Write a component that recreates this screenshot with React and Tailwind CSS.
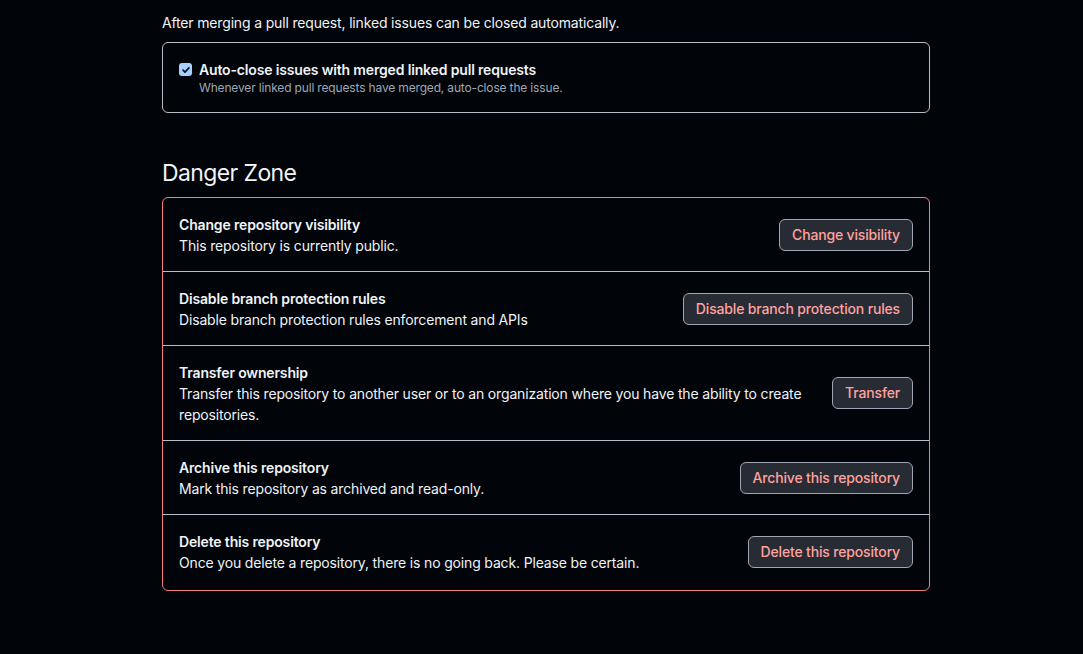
import React from 'react';

const rows = [
  {
    title: 'Change repository visibility',
    desc: 'This repository is currently public.',
    action: 'Change visibility',
  },
  {
    title: 'Disable branch protection rules',
    desc: 'Disable branch protection rules enforcement and APIs',
    action: 'Disable branch protection rules',
  },
  {
    title: 'Transfer ownership',
    desc: 'Transfer this repository to another user or to an organization where you have the ability to create repositories.',
    action: 'Transfer',
  },
  {
    title: 'Archive this repository',
    desc: 'Mark this repository as archived and read-only.',
    action: 'Archive this repository',
  },
  {
    title: 'Delete this repository',
    desc: 'Once you delete a repository, there is no going back. Please be certain.',
    action: 'Delete this repository',
  },
];

function DangerRow({ title, desc, action, last }) {
  return (
    <div className={`flex items-center gap-4 px-4 pt-[17px] ${last ? 'pb-[17px]' : 'pb-[15px] border-b border-[#b7bdc8]'}`}>
      <div className="flex-1 min-w-0 text-sm">
        <div className="font-semibold leading-[20px] text-[#f0f3f6]">{title}</div>
        <div className="leading-[21px] text-[#f0f3f6]">{desc}</div>
      </div>
      <button className="shrink-0 mb-[2px] h-8 px-3 rounded-md border border-[#9ea7b3] bg-[#272b33] text-sm font-medium text-[#ffa2a0]">
        {action}
      </button>
    </div>
  );
}

export default function App() {
  return (
    <div
      className="min-h-screen w-full bg-[#010409] text-[#f0f3f6] tracking-[-0.16px]"
      style={{ fontFamily: 'Inter, "Liberation Sans", sans-serif' }}
    >
      <div className="w-[768px] ml-[162px] pt-[12px]">
        {/* issues auto-close */}
        <p className="text-sm leading-[21px]">
          After merging a pull request, linked issues can be closed automatically.
        </p>
        <div className="mt-[9px] rounded-md border border-[#b7bdc8] px-4 py-4">
          <label className="flex items-start gap-[7px]">
            <span className="mt-[4px] w-[13px] h-[13px] rounded-[3px] bg-[#a5d0ff] flex items-center justify-center">
              <svg viewBox="0 0 12 12" className="w-[10px] h-[10px]" fill="none" stroke="#0a0c10" strokeWidth="2" strokeLinecap="round" strokeLinejoin="round">
                <path d="M2.5 6.2l2.3 2.3L9.5 3.5" />
              </svg>
            </span>
            <span className="flex flex-col">
              <span className="text-sm font-semibold leading-[21px]">Auto-close issues with merged linked pull requests</span>
              <span className="text-xs leading-[16px] text-[#9ea7b3]">
                Whenever linked pull requests have merged, auto-close the issue.
              </span>
            </span>
          </label>
        </div>

        {/* danger zone */}
        <h2 className="mt-[45px] text-[23px] leading-[30px] font-normal tracking-[-0.6px]">Danger Zone</h2>
        <div className="mt-[9px] rounded-md border border-[#f27d83]">
          {rows.map((r, i) => (
            <DangerRow key={r.title} {...r} last={i === rows.length - 1} />
          ))}
        </div>
      </div>
    </div>
  );
}
